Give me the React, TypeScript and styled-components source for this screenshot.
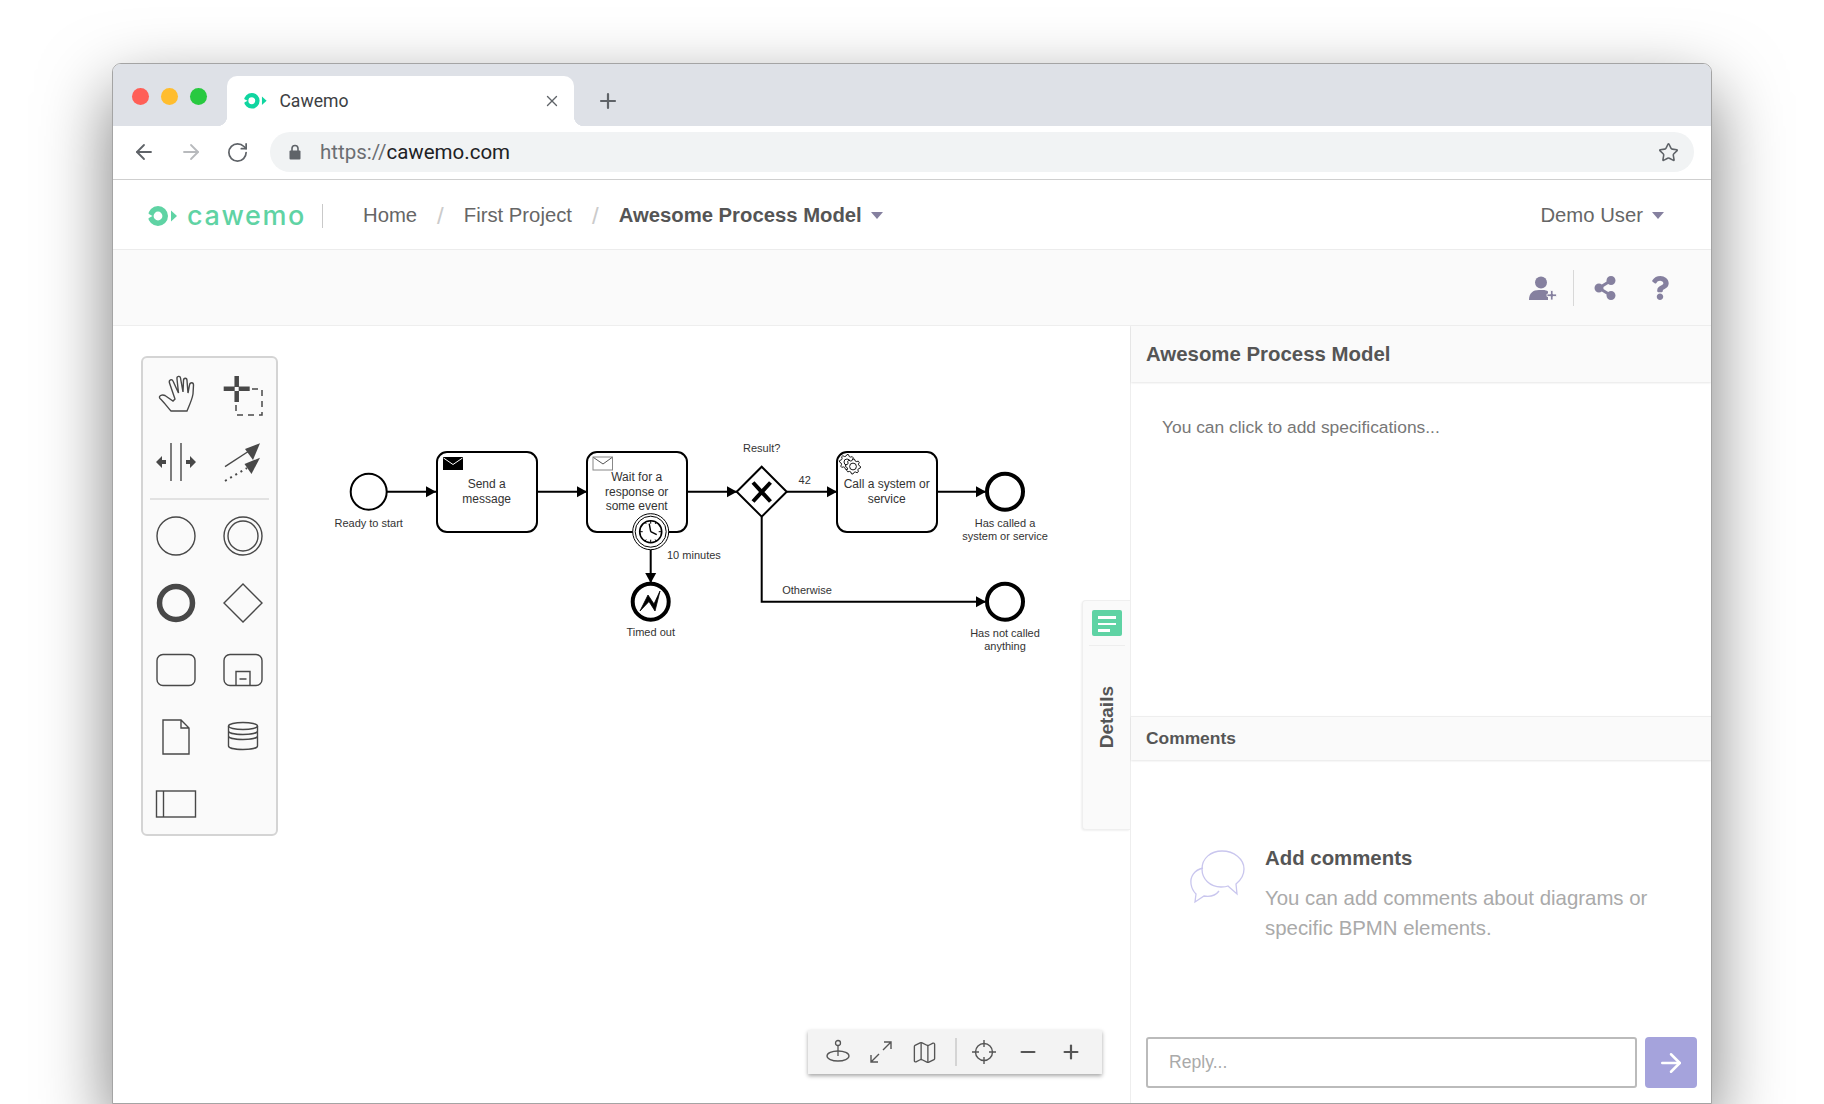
import React from "react";
import styled, { createGlobalStyle } from "styled-components";
import { ArrowLeft, ArrowRight, RotateCw, Star, X, Plus, Minus, Map } from "lucide-react";
import { FaShareAlt, FaQuestion } from "react-icons/fa";

const GlobalStyle = createGlobalStyle`
  html, body {
    margin: 0;
    background: #fff;
    overflow: hidden;
  }
  * {
    box-sizing: border-box;
  }
`;

const Page = styled.div`
  width: 1824px;
  height: 1104px;
  padding: 63px 112px 0;
  overflow: hidden;
  font-family: "Liberation Sans", Arial, sans-serif;
`;

const BrowserWindow = styled.div`
  width: 1600px;
  height: 1041px;
  display: flex;
  flex-direction: column;
  background: #fff;
  border: 1px solid #a4a4a4;
  border-radius: 9px 9px 0 0;
  box-shadow: 0 28px 70px rgba(0, 0, 0, 0.52);
  overflow: hidden;
`;

const TabStrip = styled.div`
  height: 62px;
  flex: none;
  display: flex;
  align-items: flex-end;
  background: #dee1e7;
`;

const Lights = styled.div`
  width: 114px;
  align-self: flex-start;
  display: flex;
  gap: 12px;
  padding: 24px 0 0 19px;
`;

const Light = styled.span<{ $color: string }>`
  width: 17px;
  height: 17px;
  border-radius: 50%;
  background: ${(p) => p.$color};
`;

const Tab = styled.div`
  position: relative;
  width: 347px;
  height: 50px;
  display: flex;
  align-items: center;
  padding: 0 13px 0 17px;
  background: #fff;
  border-radius: 10px 10px 0 0;
  font-family: Roboto, sans-serif;
  font-size: 17.6px;
  color: #3c4043;

  &::before,
  &::after {
    content: "";
    position: absolute;
    bottom: 0;
    width: 10px;
    height: 10px;
  }
  &::before {
    left: -10px;
    background: radial-gradient(circle at 0 0, #dee1e7 10px, #fff 10.5px);
  }
  &::after {
    right: -10px;
    background: radial-gradient(circle at 100% 0, #dee1e7 10px, #fff 10.5px);
  }
`;

const TabTitle = styled.span`
  flex: 1;
  margin-left: 12px;
`;

const NewTab = styled.div`
  height: 50px;
  margin-left: 22px;
  display: flex;
  align-items: center;
  color: #5f6368;
`;

const UrlBar = styled.div`
  height: 54px;
  flex: none;
  display: flex;
  align-items: flex-start;
  padding: 6px 17px 0 16px;
  background: #fff;
  border-bottom: 1px solid #cfcfcf;
`;

const NavButton = styled.div<{ $dim?: boolean }>`
  width: 47px;
  height: 40px;
  display: flex;
  align-items: center;
  justify-content: flex-start;
  padding-left: 3px;
  color: ${(p) => (p.$dim ? "#b8babd" : "#5f6368")};
`;

const Address = styled.div`
  flex: 1;
  height: 40px;
  display: flex;
  align-items: center;
  padding: 0 15px 0 19px;
  background: #f1f3f4;
  border-radius: 20px;
  font-family: Roboto, sans-serif;
  font-size: 20.5px;
  color: #202124;
`;

const Scheme = styled.span`
  margin-left: 19px;
  color: #6b6e72;
`;

const Host = styled.span`
  flex: 1;
`;

const AppHeader = styled.header`
  height: 70px;
  flex: none;
  display: flex;
  align-items: center;
  padding: 2px 47px 0 35px;
  border-bottom: 1px solid #ececec;
  font-size: 20.3px;
  color: #666;
`;

const Logo = styled.div`
  width: 175px;
  height: 24px;
  margin-right: 40px;
  display: flex;
  align-items: center;
  gap: 9px;
  border-right: 1px solid #c9c9c9;
  font-family: Inter, sans-serif;
  font-size: 27px;
  font-weight: 500;
  letter-spacing: 1.6px;
  color: #5fd3a4;
`;

const Crumb = styled.span<{ $bold?: boolean }>`
  font-weight: ${(p) => (p.$bold ? 700 : 400)};
  color: ${(p) => (p.$bold ? "#555" : "#666")};
`;

const Slash = styled.span`
  margin: 0 20px;
  font-size: 24px;
  font-weight: 300;
  color: #cbcbcb;
`;

const Caret = styled.span`
  width: 0;
  height: 0;
  margin-left: 9px;
  border-left: 6.5px solid transparent;
  border-right: 6.5px solid transparent;
  border-top: 7px solid #85809f;
`;

const Spacer = styled.div`
  flex: 1;
`;

const ActionBar = styled.div`
  height: 76px;
  flex: none;
  display: flex;
  align-items: center;
  justify-content: flex-end;
  padding-right: 39px;
  background: #fafafa;
  border-bottom: 1px solid #eee;
  color: #85809f;
`;

const ActionIcon = styled.div<{ $gap?: number }>`
  display: flex;
  margin-left: ${(p) => p.$gap ?? 0}px;
`;

const ActionDivider = styled.div`
  width: 1px;
  height: 36px;
  margin: 0 19px 0 16px;
  background: #d8d8d8;
`;

const Workspace = styled.div`
  flex: 1;
  display: flex;
  min-height: 0;
`;

const Canvas = styled.main`
  position: relative;
  flex: 1;
  background: #fff;
`;

const Diagram = styled.svg`
  position: absolute;
  left: 0;
  top: 0;
  font-family: "Liberation Sans", Arial, sans-serif;
`;

const Palette = styled.div`
  position: absolute;
  left: 28px;
  top: 30px;
  width: 137px;
  height: 480px;
  padding-top: 3px;
  background: #fafafa;
  border: 2px solid #d4d4d4;
  border-radius: 6px;
`;

const PaletteGrid = styled.div`
  display: grid;
  margin-left: -1px;
  grid-template-columns: 67px 67px;
  grid-auto-rows: 67px;
`;

const PaletteCell = styled.div`
  display: flex;
  align-items: center;
  justify-content: center;
  color: #484848;
`;

const PaletteLine = styled.div`
  height: 2px;
  margin: 3px 7px 2px;
  background: #e2e2e2;
`;

const ZoomBar = styled.div`
  position: absolute;
  left: 695px;
  bottom: 29px;
  width: 294px;
  height: 44px;
  display: flex;
  align-items: center;
  padding-left: 8px;
  background: #f3f3f3;
  box-shadow: 0 2px 4px rgba(0, 0, 0, 0.35);
  color: #555;
`;

const ZoomButton = styled.div`
  width: 43.5px;
  display: flex;
  justify-content: center;
`;

const ZoomDivider = styled.div`
  width: 2px;
  height: 28px;
  margin: 0 6px 0 8px;
  background: #d4d4d4;
`;

const DetailsTab = styled.div`
  position: absolute;
  right: 0;
  top: 274px;
  width: 48px;
  height: 230px;
  display: flex;
  flex-direction: column;
  align-items: center;
  padding-top: 9px;
  background: #fafafa;
  border: 1px solid #efefef;
  border-right: 0;
  border-radius: 4px 0 0 4px;
  box-shadow: -1px 1px 2px rgba(0, 0, 0, 0.06);
`;

const DetailsBadge = styled.div`
  width: 30px;
  height: 26px;
  display: flex;
  flex-direction: column;
  gap: 4px;
  padding: 6px 6px 0;
  background: #5fd3a4;
  border-radius: 2px;
`;

const BadgeLine = styled.span<{ $short?: boolean }>`
  height: 2.5px;
  width: ${(p) => (p.$short ? "12px" : "18px")};
  background: #fff;
`;

const DetailsRule = styled.div`
  width: 36px;
  height: 1px;
  margin-top: 9px;
  background: #eee;
`;

const DetailsLabel = styled.div`
  margin-top: 40px;
  writing-mode: vertical-rl;
  transform: rotate(180deg);
  font-size: 19px;
  font-weight: 700;
  color: #555;
`;

const SidePanel = styled.aside`
  width: 581px;
  flex: none;
  display: flex;
  flex-direction: column;
  border-left: 1px solid #eee;
`;

const PanelHeader = styled.div<{ $height: number; $size: number; $topLine?: boolean }>`
  height: ${(p) => p.$height}px;
  flex: none;
  display: flex;
  align-items: center;
  padding-left: 15px;
  background: #fafafa;
  border-top: ${(p) => (p.$topLine ? "1px solid #eee" : "0")};
  box-shadow: 0 1px 2px rgba(0, 0, 0, 0.1);
  font-size: ${(p) => p.$size}px;
  font-weight: 700;
  color: #555;
`;

const Specs = styled.div`
  flex: 1;
  padding: 33px 31px;
  font-size: 17.4px;
  line-height: 24px;
  color: #777;
`;

const EmptyComments = styled.div`
  height: 277px;
  flex: none;
  display: flex;
  padding: 86px 30px 0 59px;
`;

const EmptyIcon = styled.div`
  width: 76px;
  flex: none;
  padding-top: 4px;
  margin-left: -1px;
`;

const EmptyTitle = styled.div`
  font-size: 20.4px;
  font-weight: 700;
  line-height: 24px;
  color: #555;
`;

const EmptyText = styled.div`
  margin-top: 13px;
  font-size: 20.4px;
  line-height: 30px;
  color: #aaa;
`;

const ReplyRow = styled.div`
  display: flex;
  gap: 8px;
  padding: 0 14px 15px 15px;
`;

const ReplyInput = styled.div`
  flex: 1;
  height: 51px;
  display: flex;
  align-items: center;
  padding-left: 21px;
  border: 2px solid #bbb;
  border-radius: 3px;
  font-size: 17.6px;
  color: #aaa;
`;

const SendButton = styled.div`
  width: 52px;
  height: 51px;
  display: flex;
  align-items: center;
  justify-content: center;
  background: #a5a3dc;
  border-radius: 4px;
  color: #fff;
`;

const LogoMark = ({ color, scale }: { color: string; scale: number }) => (
  <svg width={30 * scale} height={20 * scale} viewBox="0 0 30 20">
    <circle cx="10" cy="10" r="7.2" fill="none" stroke={color} strokeWidth="5.6" />
    <path d="M-1 7 L4.500 10 L-1 13 Z" fill="#fff" />
    <path d="M23 4.500 L29 10 L23 15.500 Z" fill={color} />
  </svg>
);

const gearPath = (cx: number, cy: number, r: number, teeth: number) => {
  const pts: string[] = [];
  for (let i = 0; i < teeth * 4; i++) {
    const a = (i / (teeth * 4)) * Math.PI * 2;
    const rad = i % 4 < 2 ? r : r - 1.6;
    pts.push(`${(cx + rad * Math.cos(a)).toFixed(2)},${(cy + rad * Math.sin(a)).toFixed(2)}`);
  }
  return pts.join(" ");
};

const Flow = ({ d }: { d: string }) => <path d={d} fill="none" stroke="#000" strokeWidth="2" />;

const Head = ({ x, y, down }: { x: number; y: number; down?: boolean }) => (
  <polygon
    points={down ? `${x},${y} ${x - 5.5},${y - 10} ${x + 5.5},${y - 10}` : `${x},${y} ${x - 10},${y - 5.5} ${x - 10},${y + 5.5}`}
    fill="#000"
  />
);

const Label = ({ x, y, size = 11, anchor = "middle", children }: { x: number; y: number; size?: number; anchor?: "middle" | "start"; children: string }) => (
  <text x={x} y={y} fontSize={size} textAnchor={anchor} fill="#333">
    {children}
  </text>
);

const Task = ({ x }: { x: number }) => (
  <rect x={x} y={452} width={100} height={80} rx={10} fill="#fff" stroke="#000" strokeWidth="2" />
);

const ProcessDiagram = () => {
  const cx = 650.7;
  const cy = 531.7;
  return (
    <Diagram width={1018} height={777} viewBox="113 326 1018 777">
      <Flow d="M387 491.7H436M537 491.7H587M687 491.7H737M787 491.7H837M937 491.7H985M761.7 517V601.7H985M650.7 550V582" />
      <Head x={436} y={491.7} />
      <Head x={587} y={491.7} />
      <Head x={737} y={491.7} />
      <Head x={837} y={491.7} />
      <Head x={986} y={491.7} />
      <Head x={986} y={601.7} />
      <Head x={650.7} y={583} down />

      <circle cx={368.7} cy={491.7} r={18} fill="#fff" stroke="#000" strokeWidth="2" />
      <Label x={368.7} y={526.5}>Ready to start</Label>

      <Task x={437} />
      <rect x={443} y={457} width={20} height={13} fill="#000" />
      <path d="M443.5 458 L453 464.5 L462.5 458" fill="none" stroke="#fff" strokeWidth="1" />
      <Label x={486.7} y={488} size={12}>Send a</Label>
      <Label x={486.7} y={502.5} size={12}>message</Label>

      <Task x={587} />
      <rect x={593} y={457} width={19.5} height={13} fill="#fff" stroke="#888" strokeWidth="1" />
      <path d="M593.5 457.5 L603 464 L612 457.5" fill="none" stroke="#555" strokeWidth="1" />
      <Label x={636.7} y={481} size={12}>Wait for a</Label>
      <Label x={636.7} y={495.5} size={12}>response or</Label>
      <Label x={636.7} y={510} size={12}>some event</Label>

      <circle cx={cx} cy={cy} r={18} fill="#fff" stroke="#000" strokeWidth="1" />
      <circle cx={cx} cy={cy} r={15.5} fill="#fff" stroke="#000" strokeWidth="1" />
      <circle cx={cx} cy={cy} r={11} fill="#fff" stroke="#000" strokeWidth="1.6" />
      <path
        d={`M${cx} ${cy - 11}v3M${cx} ${cy + 11}v-3M${cx - 11} ${cy}h3M${cx + 11} ${cy}h-3M${cx + 5.5} ${cy - 9.5}l-1 1.7M${cx - 5.5} ${cy - 9.5}l1 1.7M${cx + 5.5} ${cy + 9.5}l-1 -1.7M${cx - 5.5} ${cy + 9.5}l1 -1.7`}
        stroke="#000"
        strokeWidth="1"
      />
      <path d={`M${cx} ${cy}L${cx - 1.5} ${cy - 8}M${cx} ${cy}L${cx + 6} ${cy + 3}`} stroke="#000" strokeWidth="1.4" fill="none" />
      <Label x={667} y={558.5} anchor="start">10 minutes</Label>

      <circle cx={650.7} cy={601.7} r={18} fill="#fff" stroke="#000" strokeWidth="4" />
      <polygon points="640,611 648,595 654,604 660,591 655,611 649,601.5" fill="#000" stroke="#000" strokeWidth="0.8" />
      <Label x={650.7} y={636}>Timed out</Label>

      <polygon points="761.7,466.7 786.7,491.7 761.7,516.7 736.7,491.7" fill="#fff" stroke="#000" strokeWidth="2" />
      <path d="M753 482.5L770.500 501.500M770.500 482.500L753 501.500" stroke="#000" strokeWidth="4" fill="none" />
      <Label x={761.7} y={452}>Result?</Label>
      <Label x={804.7} y={484}>42</Label>

      <Task x={837} />
      <polygon points={gearPath(847, 462, 7.5, 8)} fill="#fff" stroke="#000" strokeWidth="0.9" />
      <circle cx={847} cy={462} r={3} fill="#fff" stroke="#000" strokeWidth="0.9" />
      <polygon points={gearPath(853, 466.5, 7.5, 8)} fill="#fff" stroke="#000" strokeWidth="0.9" />
      <circle cx={853} cy={466.5} r={3.4} fill="#fff" stroke="#000" strokeWidth="0.9" />
      <Label x={886.7} y={488} size={12}>Call a system or</Label>
      <Label x={886.7} y={502.5} size={12}>service</Label>

      <circle cx={1005} cy={491.7} r={18} fill="#fff" stroke="#000" strokeWidth="4" />
      <Label x={1005} y={526.5}>Has called a</Label>
      <Label x={1005} y={540}>system or service</Label>

      <Label x={807} y={593.5}>Otherwise</Label>
      <circle cx={1005} cy={601.7} r={18} fill="#fff" stroke="#000" strokeWidth="4" />
      <Label x={1005} y={636.5}>Has not called</Label>
      <Label x={1005} y={650}>anything</Label>
    </Diagram>
  );
};

const PaletteIcon = ({ children }: { children: React.ReactNode }) => (
  <svg width={44} height={44} viewBox="0 0 44 44" fill="none" stroke="currentColor" strokeWidth="1.4">
    {children}
  </svg>
);

const ToolPalette = () => (
  <Palette>
    <PaletteGrid>
      <PaletteCell>
        <PaletteIcon>
          <path d="M17 38H33C35 33 38 27 39 21L39.5 12C39.5 9 36 9 35.5 12L34 20L33 7.500C33 4.500 29.5 4.500 29.5 7.500L29 19L26.5 5C26 2.500 22.5 3 23 6L24.500 20L19 8C18 5.500 14.500 7 15.500 10L21 26L19 28L11 22.500C8 21 4 23 6 25.500C10 29 14 35 17 38Z" />
        </PaletteIcon>
      </PaletteCell>
      <PaletteCell>
        <PaletteIcon>
          <path d="M15.700 3v26M2.700 15.700h26" strokeWidth="4.500" strokeDasharray="11 4 11" />
          <path d="M31 16h10v26h-26v-10" strokeWidth="1.500" strokeDasharray="6 5" />
        </PaletteIcon>
      </PaletteCell>
      <PaletteCell>
        <PaletteIcon>
          <path d="M17 3v38M27 3v38" />
          <path d="M2 22l6-6v4h4v4h-4v4zM42 22l-6-6v4h-4v4h4v4z" fill="currentColor" stroke="none" />
        </PaletteIcon>
      </PaletteCell>
      <PaletteCell>
        <PaletteIcon>
          <path d="M4 26.700L28 11" />
          <path d="M39 3.300L24 9l8 11z" fill="currentColor" stroke="none" />
          <path d="M4 41L26 28" strokeDasharray="2 4" strokeWidth="2" />
          <path d="M39 17.700L23.500 24l7 10z" fill="currentColor" stroke="none" />
        </PaletteIcon>
      </PaletteCell>
    </PaletteGrid>
    <PaletteLine />
    <PaletteGrid>
      <PaletteCell>
        <PaletteIcon>
          <circle cx="22" cy="22" r="19" />
        </PaletteIcon>
      </PaletteCell>
      <PaletteCell>
        <PaletteIcon>
          <circle cx="22" cy="22" r="19" />
          <circle cx="22" cy="22" r="15" />
        </PaletteIcon>
      </PaletteCell>
      <PaletteCell>
        <PaletteIcon>
          <circle cx="22" cy="22" r="16.500" strokeWidth="5.500" />
        </PaletteIcon>
      </PaletteCell>
      <PaletteCell>
        <PaletteIcon>
          <path d="M22 3L41 22L22 41L3 22Z" />
        </PaletteIcon>
      </PaletteCell>
      <PaletteCell>
        <PaletteIcon>
          <rect x="3" y="6.500" width="38" height="31" rx="6" />
        </PaletteIcon>
      </PaletteCell>
      <PaletteCell>
        <PaletteIcon>
          <rect x="3" y="6.500" width="38" height="31" rx="6" />
          <path d="M15 37.500V23.500h14v14M18.500 31h7" />
        </PaletteIcon>
      </PaletteCell>
      <PaletteCell>
        <PaletteIcon>
          <path d="M9 5h18l8 8v26H9zM27 5v8h8" />
        </PaletteIcon>
      </PaletteCell>
      <PaletteCell>
        <PaletteIcon>
          <ellipse cx="22" cy="11" rx="14.500" ry="3.500" />
          <path d="M7.500 11v20c0 2 6.500 3.500 14.500 3.500s14.500-1.500 14.500-3.500V11M7.500 16c0 2 6.500 3.500 14.500 3.500s14.500-1.500 14.500-3.500M7.500 21c0 2 6.500 3.500 14.500 3.500s14.500-1.500 14.500-3.500" />
        </PaletteIcon>
      </PaletteCell>
      <PaletteCell>
        <PaletteIcon>
          <rect x="2.500" y="9" width="39" height="26" />
          <path d="M9.500 9v26" />
        </PaletteIcon>
      </PaletteCell>
    </PaletteGrid>
  </Palette>
);

const ZoomControls = () => (
  <ZoomBar>
    <ZoomButton>
      <svg width={26} height={26} viewBox="0 0 26 26" fill="none" stroke="currentColor" strokeWidth="1.3">
        <circle cx="13" cy="4" r="2.500" />
        <path d="M13 6.500V17" />
        <ellipse cx="13" cy="17" rx="11" ry="5" />
      </svg>
    </ZoomButton>
    <ZoomButton>
      <svg width={24} height={24} viewBox="0 0 24 24" fill="none" stroke="currentColor" strokeWidth="1.4">
        <path d="M14 10L22 2M15 2h7v7M10 14L2 22M2 15v7h7" />
      </svg>
    </ZoomButton>
    <ZoomButton>
      <Map size={27} strokeWidth={1.2} />
    </ZoomButton>
    <ZoomDivider />
    <ZoomButton>
      <svg width={26} height={26} viewBox="0 0 26 26" fill="none" stroke="currentColor" strokeWidth="1.4">
        <circle cx="13" cy="13" r="8.500" />
        <path d="M13 1v7M13 18v7M1 13h7M18 13h7" />
      </svg>
    </ZoomButton>
    <ZoomButton>
      <Minus size={22} strokeWidth={2.4} />
    </ZoomButton>
    <ZoomButton>
      <Plus size={22} strokeWidth={2.4} />
    </ZoomButton>
  </ZoomBar>
);

export default function App() {
  return (
    <Page>
      <GlobalStyle />
      <BrowserWindow>
        <TabStrip>
          <Lights>
            <Light $color="#ff5f57" />
            <Light $color="#ffbd2e" />
            <Light $color="#28c940" />
          </Lights>
          <Tab>
            <LogoMark color="#10d5a0" scale={0.78} />
            <TabTitle>Cawemo</TabTitle>
            <X size={18} strokeWidth={1.8} color="#5f6368" />
          </Tab>
          <NewTab>
            <Plus size={24} strokeWidth={2.2} />
          </NewTab>
        </TabStrip>

        <UrlBar>
          <NavButton>
            <ArrowLeft size={24} strokeWidth={1.8} />
          </NavButton>
          <NavButton $dim>
            <ArrowRight size={24} strokeWidth={1.8} />
          </NavButton>
          <NavButton>
            <RotateCw size={23} strokeWidth={1.8} />
          </NavButton>
          <Address>
            <svg width={12} height={16} viewBox="0 0 12 16">
              <path d="M3 7V4.500a3 3 0 0 1 6 0V7" fill="none" stroke="#5f6368" strokeWidth="1.600" />
              <rect x="0.500" y="6.500" width="11" height="9" rx="1" fill="#5f6368" />
            </svg>
            <Scheme>https://</Scheme>
            <Host>cawemo.com</Host>
            <Star size={21} strokeWidth={1.8} color="#5f6368" />
          </Address>
        </UrlBar>

        <AppHeader>
          <Logo>
            <LogoMark color="#5fd3a4" scale={1} />
            <span>cawemo</span>
          </Logo>
          <Crumb>Home</Crumb>
          <Slash>/</Slash>
          <Crumb>First Project</Crumb>
          <Slash>/</Slash>
          <Crumb $bold>Awesome Process Model</Crumb>
          <Caret />
          <Spacer />
          <Crumb>Demo User</Crumb>
          <Caret />
        </AppHeader>

        <ActionBar>
          <ActionIcon>
            <svg width={28} height={24} viewBox="0 0 28 24" fill="currentColor">
              <circle cx="12" cy="6.500" r="6" />
              <path d="M0 24c0-7 4-10 10-10h4c2 0 4 .5 5 1.500V24z" />
              <path d="M21.500 14.500h2.500v3.500h3.500v2.500h-3.500V24h-2.500v-3.500H18V18h3.500z" stroke="#fafafa" strokeWidth=".8" />
            </svg>
          </ActionIcon>
          <ActionDivider />
          <ActionIcon>
            <FaShareAlt size={24} />
          </ActionIcon>
          <ActionIcon $gap={31}>
            <FaQuestion size={24} />
          </ActionIcon>
        </ActionBar>

        <Workspace>
          <Canvas>
            <ProcessDiagram />
            <ToolPalette />
            <ZoomControls />
            <DetailsTab>
              <DetailsBadge>
                <BadgeLine />
                <BadgeLine />
                <BadgeLine $short />
              </DetailsBadge>
              <DetailsRule />
              <DetailsLabel>Details</DetailsLabel>
            </DetailsTab>
          </Canvas>

          <SidePanel>
            <PanelHeader $height={56} $size={20.4}>Awesome Process Model</PanelHeader>
            <Specs>You can click to add specifications...</Specs>
            <PanelHeader $height={44} $size={17.4} $topLine>Comments</PanelHeader>
            <EmptyComments>
              <EmptyIcon>
                <svg width={57} height={54} viewBox="0 0 57 54" fill="none" stroke="#c9c6ee" strokeWidth="1.300">
                  <path d="M14 18C5 20 1 27 2 34c.7 4.500 3 8 5 10l-1 8 9-6c6 1 12-1 15-5" />
                  <path d="M33 1c-11 0-20 7-20 18 0 10 8 18 19 18 3 0 5 0 7-1l9 8-1-10c5-4 8-9 8-15 0-10-10-18-22-18z" />
                </svg>
              </EmptyIcon>
              <div>
                <EmptyTitle>Add comments</EmptyTitle>
                <EmptyText>
                  You can add comments about diagrams or
                  <br />
                  specific BPMN elements.
                </EmptyText>
              </div>
            </EmptyComments>
            <ReplyRow>
              <ReplyInput>Reply...</ReplyInput>
              <SendButton>
                <ArrowRight size={30} strokeWidth={2} />
              </SendButton>
            </ReplyRow>
          </SidePanel>
        </Workspace>
      </BrowserWindow>
    </Page>
  );
}
